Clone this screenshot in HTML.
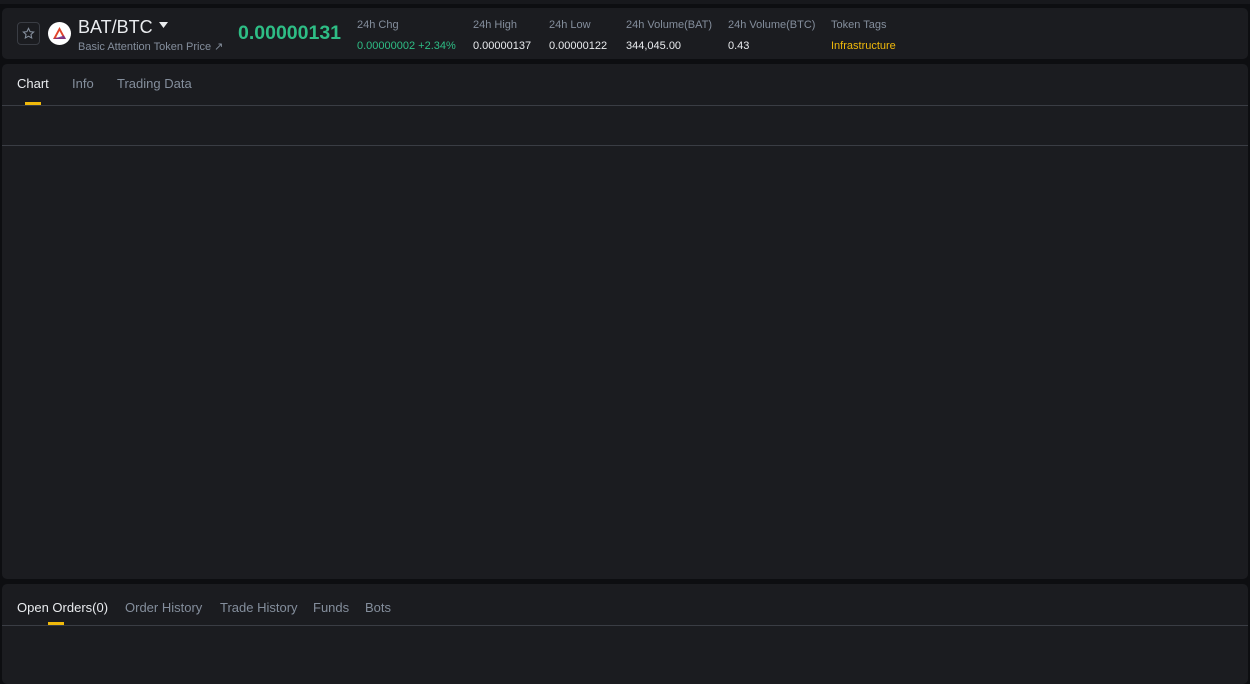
<!DOCTYPE html>
<html><head><style>
*{margin:0;padding:0;box-sizing:border-box}
body{width:1250px;height:675px;background:#0d0e11;font-family:"Liberation Sans",sans-serif;position:relative;overflow:hidden;color:#eaecef}
.top{position:absolute;left:0;top:0;width:1250px;height:4px;background:#17181c}
.p{position:absolute;left:2px;width:1246px;background:#1b1c20;border-radius:5px}
.s{position:absolute;font-size:11px;white-space:nowrap}
.g{color:#848e9c}
.tab{position:absolute;font-size:13px;color:#848e9c;white-space:nowrap}
.line{position:absolute;left:0;width:1246px;height:1px;background:#3a3d44}
.ul{position:absolute;height:3px;width:16px;background:#f0b90b}
</style></head><body>
<div class="top"></div>
<div class="p" style="top:8px;height:51px">
 <div style="position:absolute;left:15px;top:14px;width:23px;height:23px;border:1px solid #3a3d44;border-radius:4px"></div>
 <svg style="position:absolute;left:20px;top:19px" width="13" height="13" viewBox="0 0 24 24"><path d="M12 2.5l2.9 6 6.6.8-4.9 4.5 1.3 6.5L12 17l-5.9 3.3 1.3-6.5L2.5 9.3l6.6-.8z" fill="none" stroke="#848e9c" stroke-width="2"/></svg>
 <div style="position:absolute;left:46px;top:14px;width:23px;height:23px;border-radius:50%;background:#fff"></div>
 <svg style="position:absolute;left:50px;top:18px" width="15" height="14" viewBox="0 0 15 14"><path d="M7.5 1L14 13H1z" fill="#e2442a"/><path d="M7.5 5L11 11.5H4z" fill="#fff"/><path d="M1 13h13l-2-3.5" fill="#662d91" opacity=".8"/></svg>
 <div class="s" style="left:76px;top:9px;font-size:18px;color:#eaecef">BAT/BTC</div>
 <svg style="position:absolute;left:157px;top:14px" width="9" height="6"><path d="M0 0h9L4.5 6z" fill="#eaecef"/></svg>
 <div class="s g" style="left:76px;top:32px;font-size:11px">Basic Attention Token Price ↗</div>
 <div class="s" style="left:236px;top:14px;font-size:19.5px;font-weight:bold;color:#2ebd85">0.00000131</div>
 <div class="s g" style="left:355px;top:11px">24h Chg</div>
 <div class="s" style="left:355px;top:32px;color:#2ebd85">0.00000002 +2.34%</div>
 <div class="s g" style="left:471px;top:11px">24h High</div>
 <div class="s" style="left:471px;top:32px">0.00000137</div>
 <div class="s g" style="left:547px;top:11px">24h Low</div>
 <div class="s" style="left:547px;top:32px">0.00000122</div>
 <div class="s g" style="left:624px;top:11px">24h Volume(BAT)</div>
 <div class="s" style="left:624px;top:32px">344,045.00</div>
 <div class="s g" style="left:726px;top:11px">24h Volume(BTC)</div>
 <div class="s" style="left:726px;top:32px">0.43</div>
 <div class="s g" style="left:829px;top:11px">Token Tags</div>
 <div class="s" style="left:829px;top:32px;color:#f0b90b">Infrastructure</div>
</div>
<div class="p" style="top:64px;height:515px">
 <div class="tab" style="left:15px;top:12px;color:#eaecef">Chart</div>
 <div class="tab" style="left:70px;top:12px">Info</div>
 <div class="tab" style="left:115px;top:12px">Trading Data</div>
 <div class="ul" style="left:23px;top:38px"></div>
 <div class="line" style="top:41px"></div>
 <div class="line" style="top:81px"></div>
</div>
<div class="p" style="top:584px;height:100px">
 <div class="tab" style="left:15px;top:16px;color:#eaecef">Open Orders(0)</div>
 <div class="tab" style="left:123px;top:16px">Order History</div>
 <div class="tab" style="left:218px;top:16px">Trade History</div>
 <div class="tab" style="left:311px;top:16px">Funds</div>
 <div class="tab" style="left:363px;top:16px">Bots</div>
 <div class="ul" style="left:46px;top:38px"></div>
 <div class="line" style="top:41px"></div>
</div>
</body></html>
